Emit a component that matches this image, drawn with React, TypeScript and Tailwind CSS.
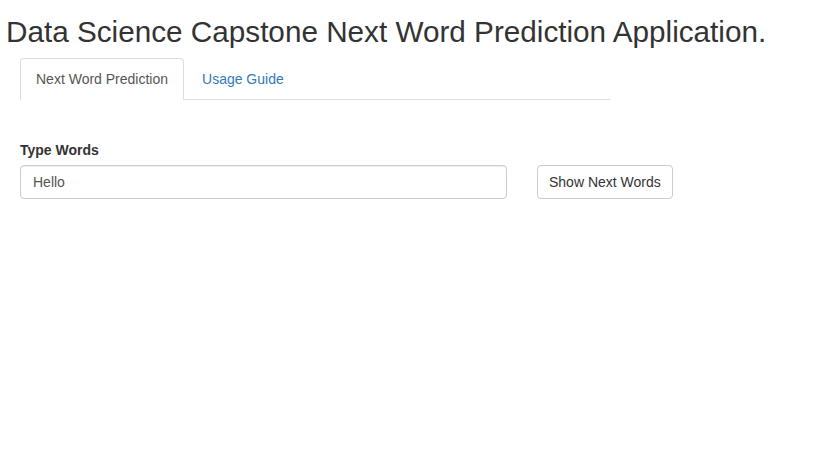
import React from "react";

export default function App() {
  return (
    <div className="w-[815px] h-[454px] bg-white text-[#333] font-['Liberation_Sans',Arial,sans-serif] text-[14px] leading-[20px]">
      <h2 className="pt-[15px] pl-[6px] text-[29.7px] leading-[33px] font-normal text-[#333]">
        Data Science Capstone Next Word Prediction Application.
      </h2>
      <div className="pl-[20px] pt-[10px]">
        <div className="w-[590px] flex border-b border-[#ddd]">
          <div className="-mb-px bg-white border border-[#ddd] border-b-transparent rounded-t-[4px] px-[15px] pt-[10px] pb-[9px] text-[#555]">
            Next Word Prediction
          </div>
          <div className="ml-[2px] px-[15px] pt-[10px] pb-[9px] text-[#337ab7] border border-transparent">
            Usage Guide
          </div>
        </div>
        <div className="pt-[40px] flex items-end">
          <div className="w-[487px] flex flex-col">
            <label className="font-bold mb-[5px]">Type Words</label>
            <div className="h-[34px] border border-[#ccc] rounded-[4px] px-[12px] py-[6px] text-[#555] shadow-[inset_0_1px_1px_rgba(0,0,0,0.075)]">
              Hello
            </div>
          </div>
          <div className="ml-[30px] h-[34px] border border-[#ccc] rounded-[4px] px-[11px] py-[6px] text-[#333] bg-white">
            Show Next Words
          </div>
        </div>
      </div>
    </div>
  );
}
